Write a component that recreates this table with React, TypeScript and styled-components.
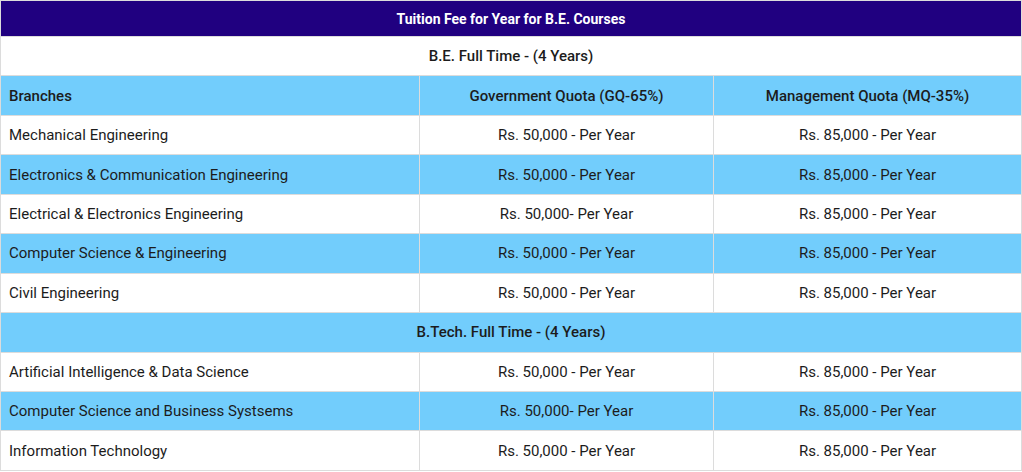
import React from "react";
import styled, { createGlobalStyle } from "styled-components";

const Global = createGlobalStyle`
  html, body { margin: 0; padding: 0; background: #fff; }
  body { font-family: Roboto, "Noto Sans", Arial, sans-serif; }
`;

const Table = styled.table`
  width: 1021px;
  border-collapse: collapse;
  table-layout: fixed;
  font-family: Roboto, Arial, sans-serif;
  font-size: 15px;
  color: #1c1c1c;
  border: 1px solid #dcdcdc;
`;

const TitleCell = styled.th`
  background: #200080;
  color: #fff;
  font-size: 14px;
  font-weight: 700;
  height: 35px;
  padding: 0;
  text-align: center;
  border: 1px solid #dcdcdc;
`;

const Row = styled.tr<{ $blue?: boolean }>`
  height: 39.45px;
  background: ${(p) => (p.$blue ? "#72cdfc" : "#fff")};
`;

const Cell = styled.td<{ $center?: boolean; $bold?: boolean }>`
  border: 1px solid #dcdcdc;
  padding: 0 8px;
  text-align: ${(p) => (p.$center ? "center" : "left")};
  font-weight: ${(p) => (p.$bold ? 500 : 400)};
  vertical-align: middle;
  white-space: nowrap;
`;

type Fee = [string, string, string];

const be: Fee[] = [
  ["Mechanical Engineering", "Rs. 50,000 - Per Year", "Rs. 85,000 - Per Year"],
  ["Electronics & Communication Engineering", "Rs. 50,000 - Per Year", "Rs. 85,000 - Per Year"],
  ["Electrical & Electronics Engineering", "Rs. 50,000- Per Year", "Rs. 85,000 - Per Year"],
  ["Computer Science & Engineering", "Rs. 50,000 - Per Year", "Rs. 85,000 - Per Year"],
  ["Civil Engineering", "Rs. 50,000 - Per Year", "Rs. 85,000 - Per Year"],
];

const btech: Fee[] = [
  ["Artificial Intelligence & Data Science", "Rs. 50,000 - Per Year", "Rs. 85,000 - Per Year"],
  ["Computer Science and Business Systsems", "Rs. 50,000- Per Year", "Rs. 85,000 - Per Year"],
  ["Information Technology", "Rs. 50,000 - Per Year", "Rs. 85,000 - Per Year"],
];

const FeeRow = ({ f, blue }: { f: Fee; blue: boolean }) => (
  <Row $blue={blue}>
    <Cell>{f[0]}</Cell>
    <Cell $center>{f[1]}</Cell>
    <Cell $center>{f[2]}</Cell>
  </Row>
);

export default function App() {
  return (
    <>
      <Global />
      <Table>
        <colgroup>
          <col style={{ width: 419 }} />
          <col style={{ width: 294 }} />
          <col style={{ width: 308 }} />
        </colgroup>
        <thead>
          <tr>
            <TitleCell colSpan={3}>Tuition Fee for Year for B.E. Courses</TitleCell>
          </tr>
        </thead>
        <tbody>
          <Row>
            <Cell colSpan={3} $center $bold>B.E. Full Time - (4 Years)</Cell>
          </Row>
          <Row $blue>
            <Cell $bold>Branches</Cell>
            <Cell $center $bold>Government Quota (GQ-65%)</Cell>
            <Cell $center $bold>Management Quota (MQ-35%)</Cell>
          </Row>
          {be.map((f, i) => (
            <FeeRow key={f[0]} f={f} blue={i % 2 === 1} />
          ))}
          <Row $blue>
            <Cell colSpan={3} $center $bold>B.Tech. Full Time - (4 Years)</Cell>
          </Row>
          {btech.map((f, i) => (
            <FeeRow key={f[0]} f={f} blue={i % 2 === 1} />
          ))}
        </tbody>
      </Table>
    </>
  );
}
